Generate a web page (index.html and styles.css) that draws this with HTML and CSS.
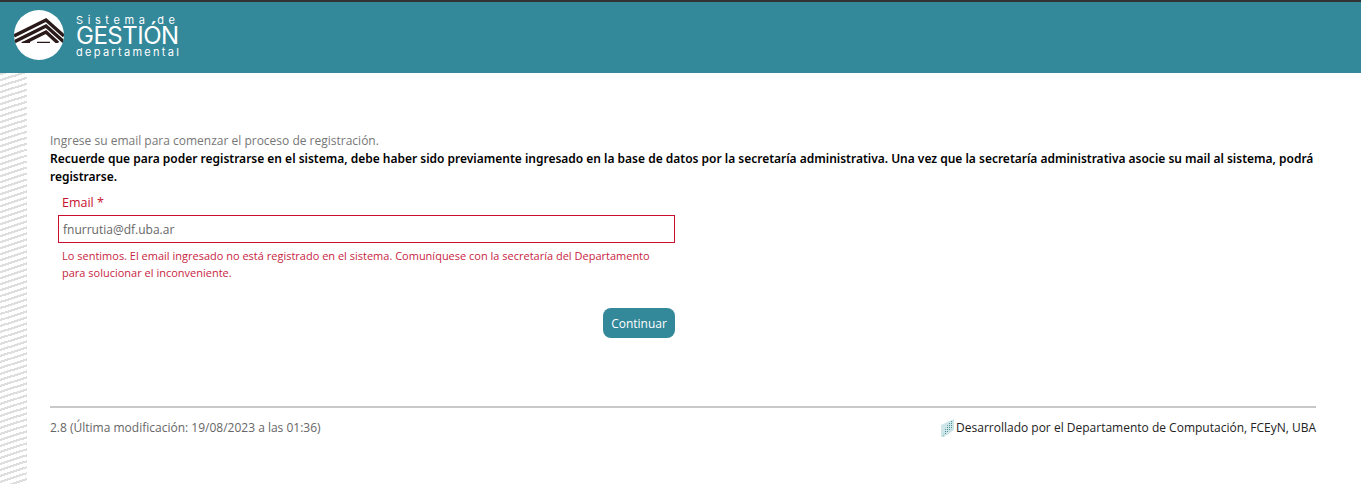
FILE: index.html
```html
<!DOCTYPE html>
<html lang="es">
<head>
<meta charset="utf-8">
<title>Sistema de Gestión Departamental</title>
<link rel="stylesheet" href="styles.css">
</head>
<body>
<header class="topbar">
  <div class="logo-disc">
    <svg class="logo-mark" width="50" height="33" viewBox="0 0 50 33">
      <path d="M0 26 L32 10 L50 26" class="roof"/>
      <path d="M0 32 L32 16 L50 32" class="roof"/>
      <path d="M8 34 L32 22 L44 33" class="roof"/>
      <path d="M8 32.4 H16 M23 32.4 H36" class="roof-base"/>
    </svg>
  </div>
  <div class="brand">
    <div class="brand-top">Sistema de</div>
    <div class="brand-main">GESTIÓN</div>
    <div class="brand-bottom">departamental</div>
  </div>
</header>
<div class="shell">
  <aside class="stripes"></aside>
  <main class="content">
    <p class="intro">Ingrese su email para comenzar el proceso de registración.</p>
    <p class="notice">Recuerde que para poder registrarse en el sistema, debe haber sido previamente ingresado en la base de datos por la secretaría administrativa. Una vez que la secretaría administrativa asocie su mail al sistema, podrá registrarse.</p>
    <form class="form">
      <label class="field-label" for="email">Email *</label>
      <input class="field-input" id="email" type="text" value="fnurrutia@df.uba.ar">
      <p class="field-error">Lo sentimos. El email ingresado no está registrado en el sistema. Comuníquese con la secretaría del Departamento para solucionar el inconveniente.</p>
      <div class="actions"><button class="btn" type="button">Continuar</button></div>
    </form>
    <footer class="footer">
      <span>2.8 (Última modificación: 19/08/2023 a las 01:36)</span>
      <span class="credit">
        <svg class="credit-icon" width="15" height="18" viewBox="0 0 15 18">
          <defs>
            <pattern id="dither" width="2" height="2" patternUnits="userSpaceOnUse">
              <rect width="2" height="2" class="credit-light"/>
              <rect width="1" height="1" class="credit-dark"/>
            </pattern>
          </defs>
          <path d="M0 6 L13 0 V11 L3 18 H0 Z" class="credit-light"/>
          <path d="M2 17 L5 8 L10 2 L12 1 V9 L5 15 Z" fill="url(#dither)"/>
        </svg>
        <span>Desarrollado por el Departamento de Computación, FCEyN, UBA</span>
      </span>
    </footer>
  </main>
</div>
</body>
</html>
```
FILE: styles.css
```css
* { box-sizing: border-box; }
html, body { margin: 0; height: 100%; }
body { font-family: "Open Sans", "Liberation Sans", sans-serif; font-size: 12px; line-height: 18px; color: #666; background: #fff; overflow: hidden; }
.topbar { height: 73px; background: #338899; border-top: 2px solid #333; display: flex; align-items: flex-start; }
.logo-disc { width: 50px; height: 50px; margin: 8px 0 0 14px; border-radius: 50%; background: #fff; overflow: hidden; flex: none; }
.logo-mark { display: block; }
.roof { fill: none; stroke: #2a1a1a; stroke-width: 3.4; }
.roof-base { fill: none; stroke: #2a1a1a; stroke-width: 1.2; }
.brand { margin: 12px 0 0 12px; color: #fff; width: 108px; font-family: "Inter", "Open Sans", sans-serif; font-weight: 400; }
.brand-top { font-size: 11px; line-height: 12px; letter-spacing: 4.6px; white-space: nowrap; }
.brand-main { font-size: 24px; line-height: 20px; letter-spacing: -0.5px; }
.brand-bottom { font-size: 11px; line-height: 12px; letter-spacing: 2.3px; white-space: nowrap; }
.shell { display: flex; height: 411px; }
.stripes { width: 27px; flex: none; background: repeating-linear-gradient(-18deg, #fff 0, #fff 3.5px, #dedede 3.5px, #dedede 5.7px); }
.content { flex: 1; padding: 59px 45px 0 23px; min-width: 0; }
.intro { margin: 0; color: #777; }
.notice { margin: 0; color: #000; font-family: "Noto Sans", "Open Sans", sans-serif; font-weight: 600; letter-spacing: -0.01px; }
.form { width: 625px; margin: 0; }
.field-label { display: block; margin: 7px 0 0 12px; color: #c8102e; font-size: 12.5px; line-height: 20px; }
.field-input { display: block; width: 617px; height: 28px; margin: 2px 0 0 8px; padding: 0 4px; border: 1px solid #c8102e; font: inherit; color: #666; background: #fff; outline: 0; }
.field-error { margin: 4px 0 0 12px; width: 600px; color: #c8253f; font-size: 11px; line-height: 17px; }
.actions { display: flex; justify-content: flex-end; margin-top: 27px; }
.btn { height: 30px; width: 72px; border: 0; border-radius: 8px; background: #338899; color: #fff; font: inherit; padding: 1px 0 0; }
.footer { margin-top: 68px; border-top: 2px solid #c8c8c8; padding-top: 11px; display: flex; justify-content: space-between; align-items: center; }
.credit { display: flex; align-items: center; color: #222; }
.credit-icon { flex: none; }
.credit-dark { fill: #4f8f9a; }
.credit-light { fill: #cfe6e8; }
```
